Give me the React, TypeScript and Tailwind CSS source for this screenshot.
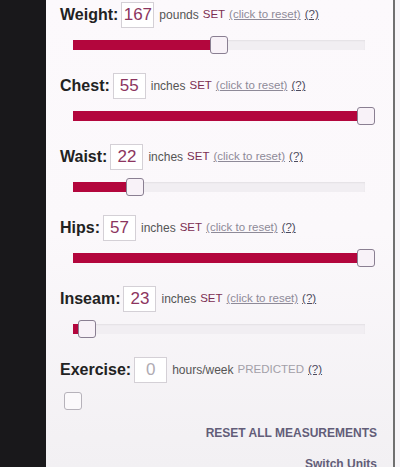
import React from 'react';

type Row = { label: string; value: string; unit: string; status: string; thumb: number; predicted?: boolean };

// thumb = centre of the slider knob, in px from the start of the track
const rows: Row[] = [
  { label: 'Weight:', value: '167', unit: 'pounds', status: 'SET', thumb: 146 },
  { label: 'Chest:', value: '55', unit: 'inches', status: 'SET', thumb: 293 },
  { label: 'Waist:', value: '22', unit: 'inches', status: 'SET', thumb: 62 },
  { label: 'Hips:', value: '57', unit: 'inches', status: 'SET', thumb: 293 },
  { label: 'Inseam:', value: '23', unit: 'inches', status: 'SET', thumb: 14 },
];

function Slider({ thumb }: { thumb: number }) {
  return (
    <div className="relative ml-[27px] h-[22px] w-[292px] flex items-center">
      <div className="relative h-[10px] w-full bg-[#f1eef2] shadow-[inset_0_1px_2px_rgba(0,0,0,0.06)]">
        <div className="h-full bg-[#b3063d]" style={{ width: Math.min(292, thumb - 6) }} />
      </div>
      <div
        className="absolute top-[2px] h-[18px] w-[18px] rounded-[3px] border border-[#8a7f92] bg-[#f8f2f8]"
        style={{ left: thumb - 9 }}
      />
    </div>
  );
}

function Measure({ row }: { row: Row }) {
  return (
    <div className="flex h-[26px] shrink-0 items-center pl-[14px]">
      <span className="text-[16px] font-bold text-[#222]">{row.label}</span>
      <span
        className={`ml-[3px] flex h-[26px] w-[33px] items-center justify-center border border-[#d4d0d6] bg-white text-[17px] ${
          row.predicted ? 'text-[#b0abb3]' : 'text-[#8c3560]'
        }`}
      >
        {row.value}
      </span>
      <span className="ml-[5px] text-[12px] text-[#555]">{row.unit}</span>
      <span className={`ml-[4px] text-[11.5px] ${row.predicted ? 'text-[#a3a0a8]' : 'text-[#7c2e52]'}`}>{row.status}</span>
      {!row.predicted && <span className="ml-[4px] text-[11.5px] text-[#8e8a98] underline">(click to reset)</span>}
      <span className="ml-[4px] text-[11.5px] text-[#4c4a5c] underline">(?)</span>
    </div>
  );
}

export default function App() {
  return (
    <div className="flex h-[467px] w-[400px] overflow-hidden bg-[#19181b] font-['Liberation_Sans',Arial,sans-serif]">
      <div className="w-[46px] shrink-0" />
      <div className="flex w-[347px] shrink-0 flex-col bg-gradient-to-b from-[#fcf9fc] via-[#fbf8fb] to-[#f2f0f3] pt-[2px]">
        {rows.map((r) => (
          <div key={r.label} className="h-[71px] shrink-0">
            <Measure row={r} />
            <div className="mt-[6px]">
              <Slider thumb={r.thumb} />
            </div>
          </div>
        ))}
        <div className="shrink-0">
          <Measure row={{ label: 'Exercise:', value: '0', unit: 'hours/week', status: 'PREDICTED', thumb: 0, predicted: true }} />
          <div className="mt-[9px] ml-[18px] h-[18px] w-[18px] rounded-[3px] border border-[#b6b2ba] bg-[#fbf9fb]" />
        </div>
        <div className="mt-[14px] shrink-0 pr-[16px] text-right text-[12px] font-bold text-[#625d78]">RESET ALL MEASUREMENTS</div>
        <div className="mt-[13px] shrink-0 pr-[16px] text-right text-[12px] font-bold text-[#625d78]">Switch Units</div>
      </div>
      <div className="w-[2px] shrink-0 bg-[#707070]" />
      <div className="flex-1 bg-[#f7f5f8]" />
    </div>
  );
}
